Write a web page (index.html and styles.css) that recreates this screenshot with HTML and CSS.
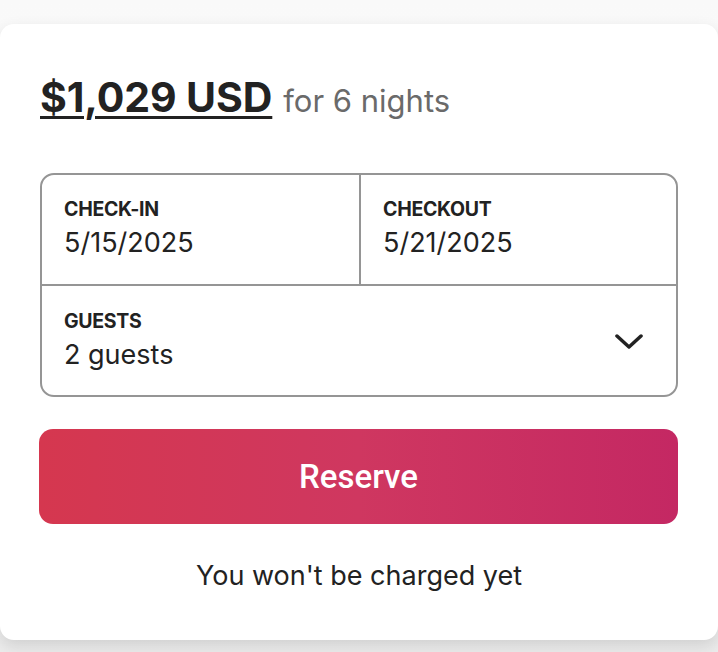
FILE: index.html
```html
<!DOCTYPE html>
<html lang="en">
<head>
<meta charset="utf-8">
<title>Reserve</title>
<link rel="stylesheet" href="styles.css">
</head>
<body>
<div class="card">
  <div class="price-row">
    <span class="price">$1,029 USD</span>
    <span class="nights">for 6 nights</span>
  </div>
  <div class="picker">
    <div class="dates">
      <div class="cell">
        <div class="label">CHECK-IN</div>
        <div class="value">5/15/2025</div>
      </div>
      <div class="cell cell-right">
        <div class="label">CHECKOUT</div>
        <div class="value">5/21/2025</div>
      </div>
    </div>
    <div class="guests">
      <div class="cell">
        <div class="label">GUESTS</div>
        <div class="value">2 guests</div>
      </div>
      <svg class="chevron" width="28" height="16" viewBox="0 0 28 16" aria-hidden="true">
        <path d="M2 2 L14 13 L26 2" fill="none" stroke="#222" stroke-width="3.5" stroke-linecap="round" stroke-linejoin="round"/>
      </svg>
    </div>
  </div>
  <button class="reserve">Reserve</button>
  <p class="note">You won't be charged yet</p>
</div>
</body>
</html>
```

FILE: styles.css
```css
html, body {
  margin: 0;
  padding: 0;
}
body {
  width: 718px;
  height: 652px;
  overflow: hidden;
  background: linear-gradient(#f9f9f9, #fbfbfb 40%, #ececec);
  font-family: Inter, "Noto Sans", "Liberation Sans", sans-serif;
  color: #222222;
}
.card {
  box-sizing: border-box;
  margin-top: 24px;
  width: 718px;
  height: 616px;
  background: #ffffff;
  border-radius: 14px;
  box-shadow: 0 6px 16px rgba(0, 0, 0, 0.12);
  padding: 51px 40px 0 40px;
}
.price-row {
  display: flex;
  align-items: baseline;
  gap: 11px;
  line-height: 44px;
  height: 44px;
}
.price {
  font-size: 41px;
  font-weight: 700;
  text-decoration: underline;
  text-decoration-thickness: 3px;
  text-underline-offset: 4px;
  letter-spacing: -0.1px;
}
.nights {
  font-size: 31px;
  font-weight: 400;
  color: #6a6a6a;
}
.picker {
  margin-top: 54px;
  box-sizing: border-box;
  width: 638px;
  border: 2px solid #959595;
  border-radius: 14px;
}
.dates {
  display: grid;
  grid-template-columns: 1fr 1fr;
  height: 109px;
  border-bottom: 2px solid #959595;
}
.cell {
  padding: 23px 22px 0 22px;
}
.cell-right {
  border-left: 2px solid #959595;
}
.label {
  font-size: 19.5px;
  font-weight: 700;
  line-height: 22px;
  letter-spacing: -0.3px;
}
.value {
  margin-top: 7px;
  font-size: 27px;
  font-weight: 400;
  line-height: 32px;
}
.guests {
  display: flex;
  justify-content: space-between;
  align-items: flex-start;
  height: 109px;
}
.guests .cell {
  padding-top: 24px;
}
.chevron {
  margin: 48px 33px 0 0;
}
.reserve {
  display: block;
  margin-top: 32px;
  width: 639px;
  height: 95px;
  margin-left: -1px;
  border: none;
  border-radius: 14px;
  background: linear-gradient(to right, #d5374f, #cf3760 50%, #c42863);
  color: #ffffff;
  font-family: Roboto, Inter, "Noto Sans", sans-serif;
  font-size: 33px;
  font-weight: 500;
  cursor: pointer;
}
.note {
  margin: 36px 0 0 0;
  text-align: center;
  font-size: 27px;
  line-height: 32px;
  color: #222222;
}
```
